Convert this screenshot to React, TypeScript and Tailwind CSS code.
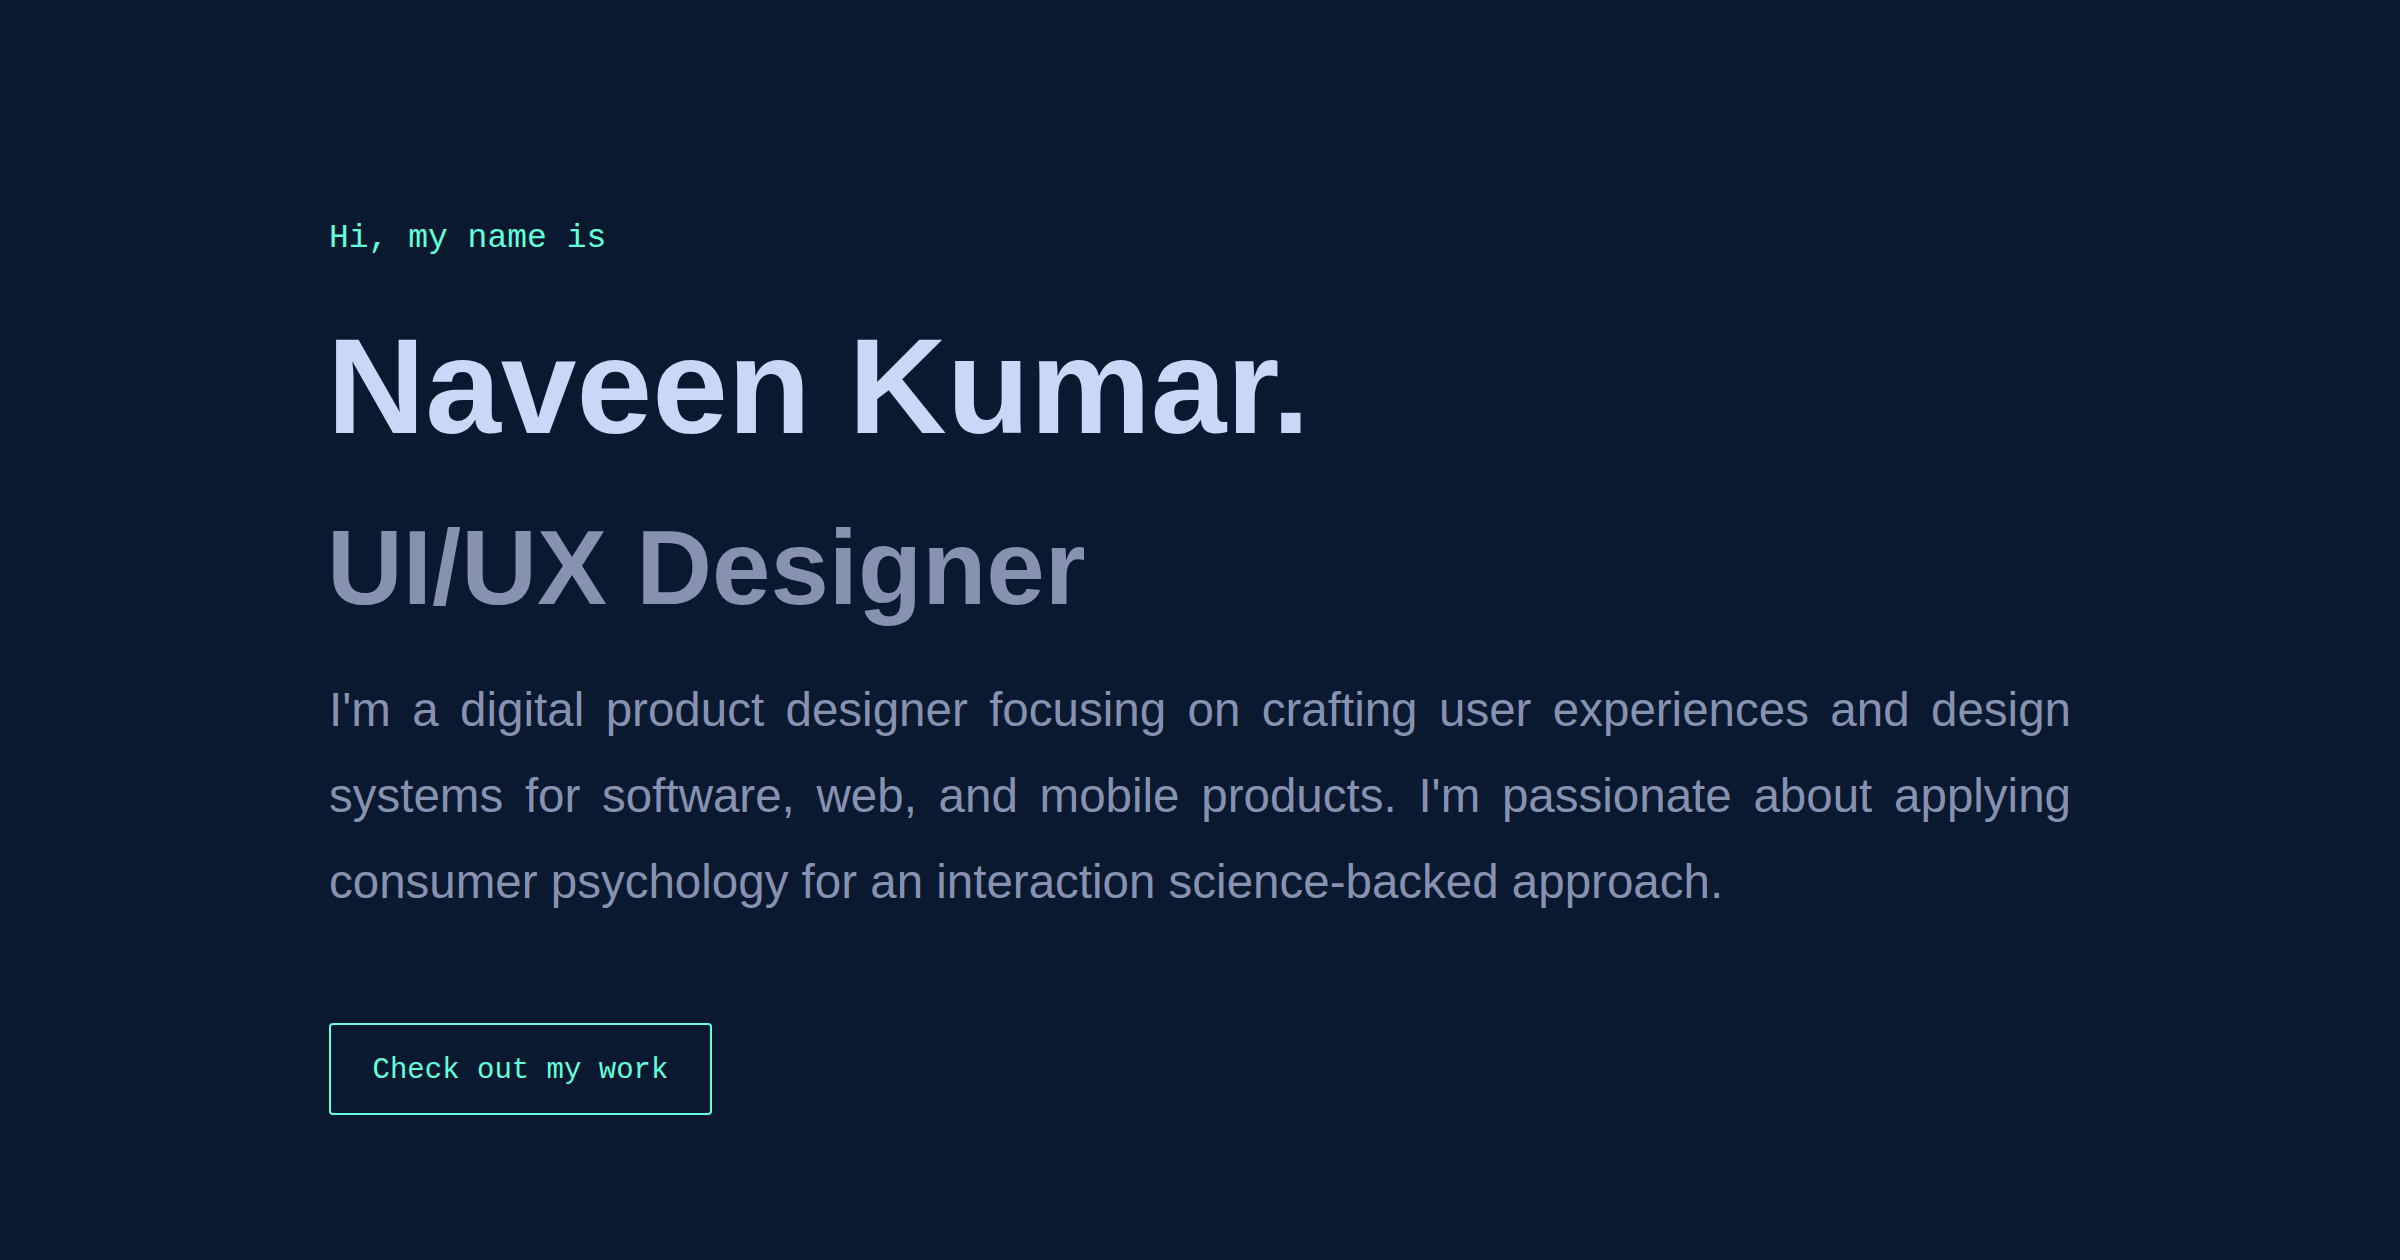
export default function App() {
  return (
    <main className="min-h-screen w-full bg-[#0a192f]">
      <section className="flex min-h-[1260px] flex-col items-start pl-[329px] pt-[222px]">
        <p className="font-['Liberation_Mono',monospace] text-[33px] leading-[33px] text-[#64ffda]">
          Hi, my name is
        </p>
        <h1 className="mt-[63px] -ml-[2px] font-['Liberation_Sans',Arial,sans-serif] text-[136px] font-bold leading-[136px] text-[#ccd6f6]">
          Naveen Kumar.
        </h1>
        <h2 className="mt-[61px] -ml-[2px] font-['Liberation_Sans',Arial,sans-serif] text-[105px] font-bold leading-[105px] text-[#8892b0]">
          UI/UX Designer
        </h2>
        <p className="mt-[47px] w-[1742px] text-justify font-['Liberation_Sans',Arial,sans-serif] text-[47.5px] leading-[86px] text-[#8892b0]">
          I'm a digital product designer focusing on crafting user experiences and design systems for
          software, web, and mobile products. I'm passionate about applying consumer psychology for an
          interaction science-backed approach.
        </p>
        <button className="mt-[98px] flex h-[92px] w-[383px] items-center justify-center rounded-[4px] border-2 border-[#64ffda] bg-transparent pt-[4px] font-['Liberation_Mono',monospace] text-[29px] text-[#64ffda]">
          Check out my work
        </button>
      </section>
    </main>
  );
}
